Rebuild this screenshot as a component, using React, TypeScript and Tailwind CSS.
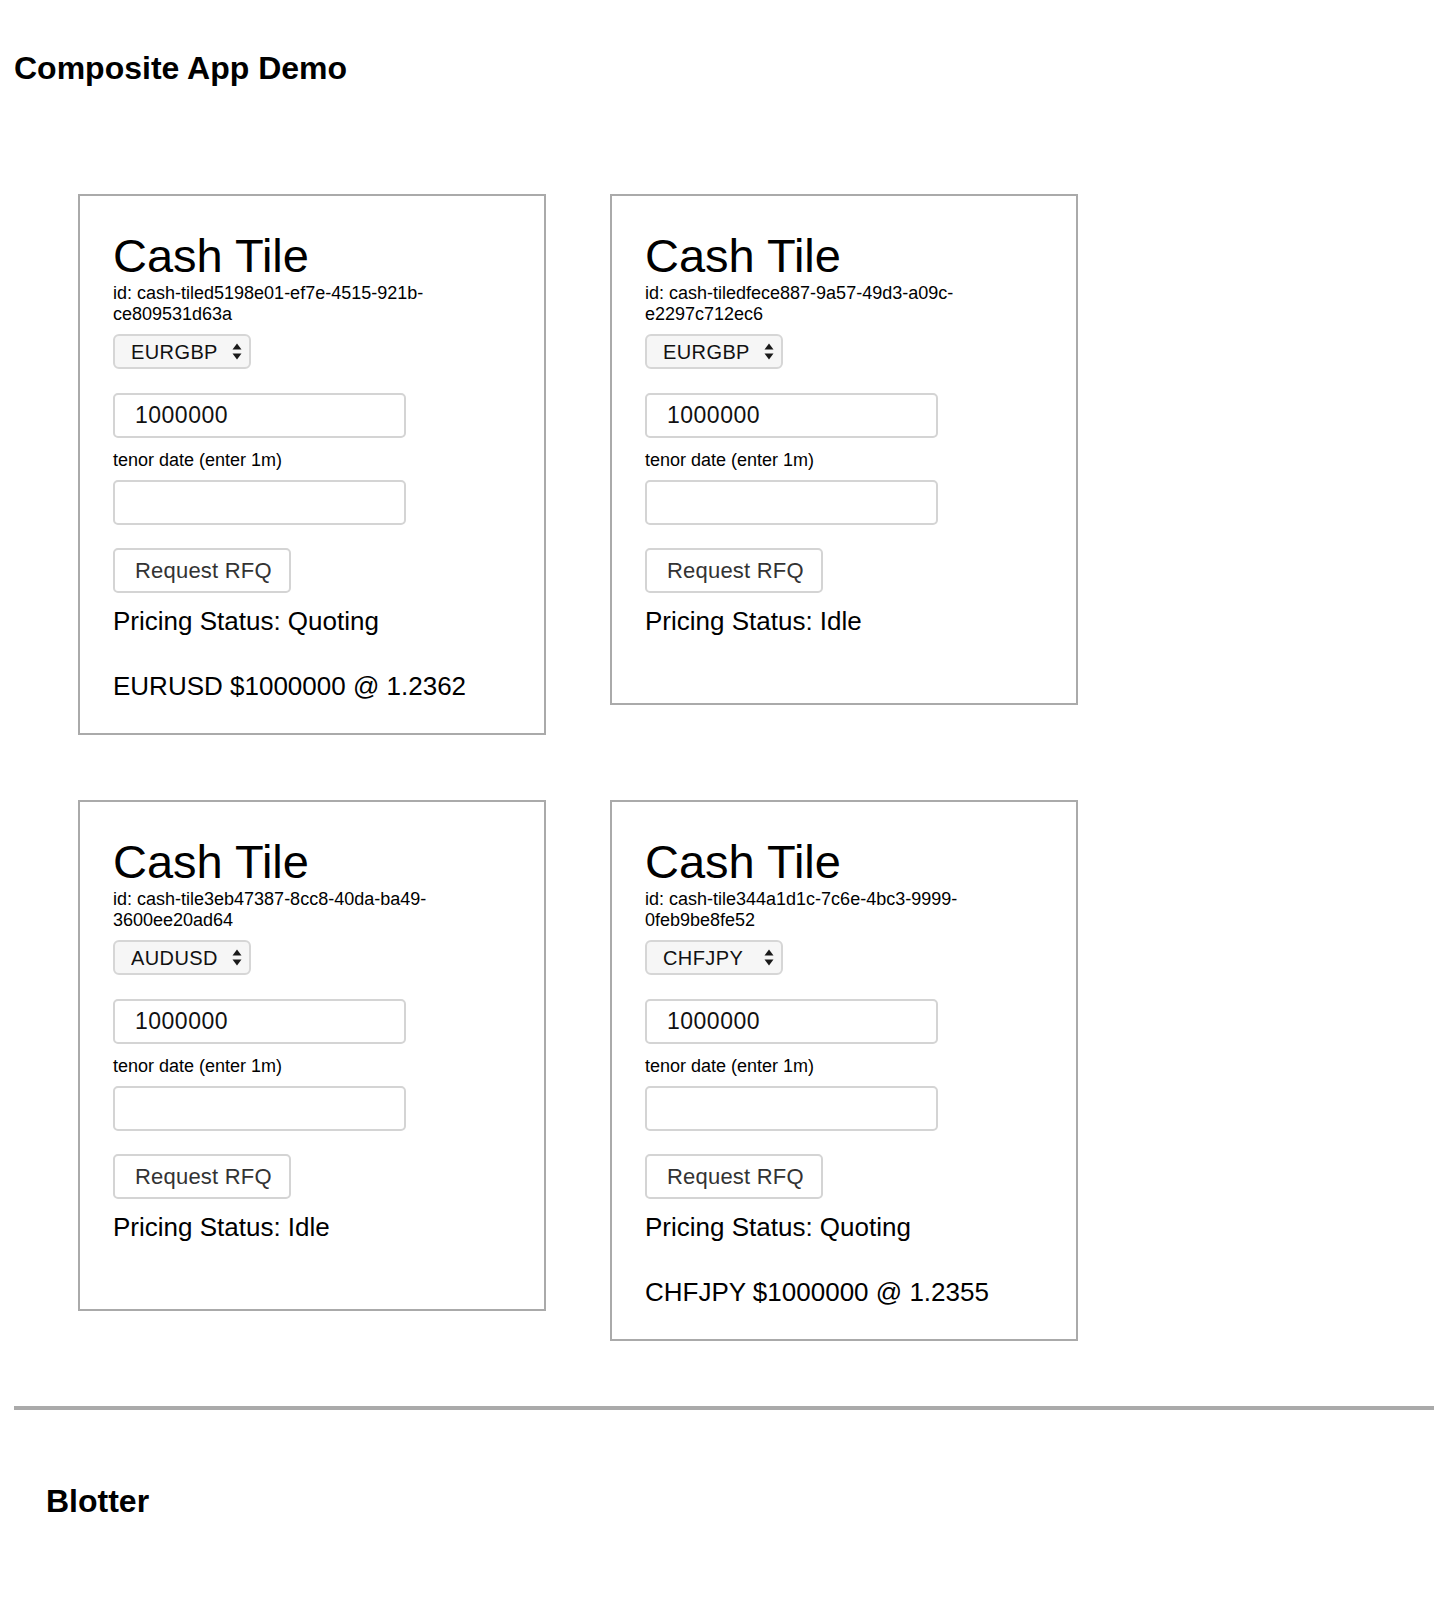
import React from "react";

type Tile = {
  id: string;
  pair: string;
  status: "Quoting" | "Idle";
  quote?: string;
};

const tiles: Tile[] = [
  {
    id: "cash-tiled5198e01-ef7e-4515-921b-ce809531d63a",
    pair: "EURGBP",
    status: "Quoting",
    quote: "EURUSD $1000000 @ 1.2362",
  },
  {
    id: "cash-tiledfece887-9a57-49d3-a09c-e2297c712ec6",
    pair: "EURGBP",
    status: "Idle",
  },
  {
    id: "cash-tile3eb47387-8cc8-40da-ba49-3600ee20ad64",
    pair: "AUDUSD",
    status: "Idle",
  },
  {
    id: "cash-tile344a1d1c-7c6e-4bc3-9999-0feb9be8fe52",
    pair: "CHFJPY",
    status: "Quoting",
    quote: "CHFJPY $1000000 @ 1.2355",
  },
];

const pairs = ["EURGBP", "EURUSD", "AUDUSD", "CHFJPY", "USDJPY"];

function SelectArrows() {
  return (
    <svg
      width="10"
      height="17"
      viewBox="0 0 10 17"
      className="pointer-events-none absolute right-[9px] top-[9px]"
    >
      <path d="M5 0.5 L9.5 6.5 L0.5 6.5 Z" fill="#1a1a1a" />
      <path d="M5 16.5 L9.5 10.5 L0.5 10.5 Z" fill="#1a1a1a" />
    </svg>
  );
}

function CashTile({ tile }: { tile: Tile }) {
  return (
    <div className="w-[468px] border-2 border-[#aaaaaa] pt-[33px] pl-[33px] pr-[33px] pb-[32px] text-black">
      <h1 className="text-[47px] leading-[54px] font-normal">Cash Tile</h1>
      <div className="text-[18px] leading-[20.5px]">id: {tile.id}</div>
      <div className="relative mt-[10px] h-[35px] w-[138px]">
        <select
          defaultValue={tile.pair}
          className="h-[35px] w-[138px] appearance-none rounded-[6px] border-2 border-[#d6d6d6] bg-[#f6f6f6] pl-[16px] text-[20px] tracking-[0.4px] text-[#111] outline-none"
        >
          {pairs.map((p) => (
            <option key={p} value={p}>
              {p}
            </option>
          ))}
        </select>
        <SelectArrows />
      </div>
      <input
        type="text"
        defaultValue="1000000"
        className="mt-[24px] block h-[45px] w-[293px] rounded-[5px] border-2 border-[#d4d4d4] bg-white pl-[20px] text-[23px] tracking-[0.5px] text-[#111] outline-none"
      />
      <div className="mt-[12px] text-[18px] leading-[20px]">tenor date (enter 1m)</div>
      <input
        type="text"
        defaultValue=""
        className="mt-[10px] block h-[45px] w-[293px] rounded-[5px] border-2 border-[#d4d4d4] bg-white pl-[20px] text-[23px] text-[#111] outline-none"
      />
      <button
        type="button"
        className="mt-[23px] block h-[45px] w-[178px] rounded-[5px] border-2 border-[#d4d4d4] bg-white text-left pl-[20px] text-[22px] tracking-[0.2px] text-[#333]"
      >
        Request RFQ
      </button>
      <p className="mt-[13px] text-[26px] leading-[30px]">Pricing Status: {tile.status}</p>
      {tile.quote ? (
        <p className="mt-[35px] text-[26px] leading-[30px]">{tile.quote}</p>
      ) : (
        <div className="h-[35px]" />
      )}
    </div>
  );
}

export default function App() {
  return (
    <div
      className="min-h-[1606px] w-[1446px] bg-white pt-[50px] pl-[14px] text-black"
      style={{ fontFamily: '"Liberation Sans", Arial, sans-serif' }}
    >
      <h2 className="text-[32px] leading-[36px] font-bold">Composite App Demo</h2>
      <div className="mt-[108px] pl-[64px] grid grid-cols-[468px_468px] gap-x-[64px] gap-y-[65px] items-start">
        {tiles.map((t) => (
          <CashTile key={t.id} tile={t} />
        ))}
      </div>
      <div className="mt-[65px] h-[4px] w-[1420px] bg-[#aaaaaa]" />
      <h2 className="mt-[73px] ml-[32px] text-[32px] leading-[36px] font-bold">Blotter</h2>
    </div>
  );
}
